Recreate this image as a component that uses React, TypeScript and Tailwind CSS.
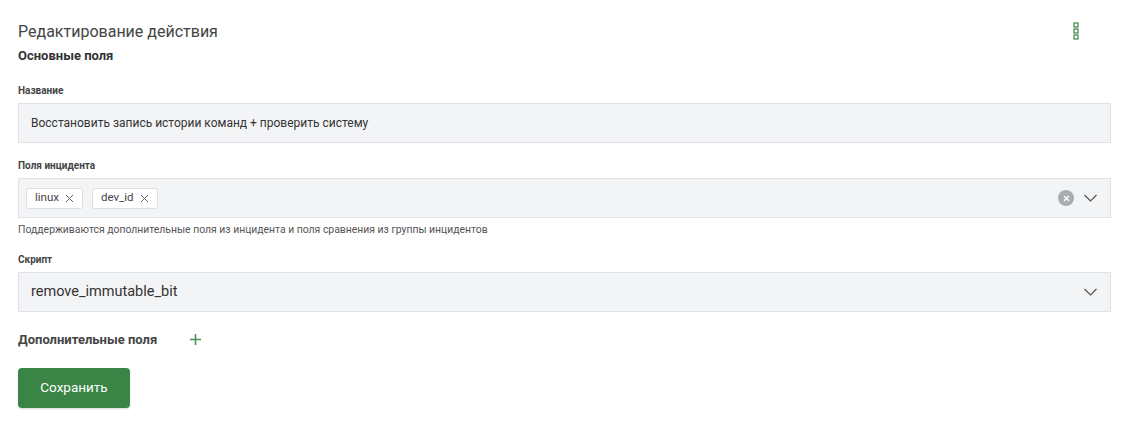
import React from 'react';

const font = { fontFamily: 'Roboto, "Noto Sans", sans-serif' };

function DotsIcon() {
  return (
    <svg width="6" height="18" viewBox="0 0 6 18" className="text-[#2a7a36]">
      <rect x="1" y="1" width="4" height="4" fill="none" stroke="currentColor" strokeWidth="1.1" />
      <rect x="1" y="7" width="4" height="4" fill="none" stroke="currentColor" strokeWidth="1.1" />
      <rect x="1" y="13" width="4" height="4" fill="none" stroke="currentColor" strokeWidth="1.1" />
    </svg>
  );
}

function Chevron() {
  return (
    <svg width="13" height="8" viewBox="0 0 13 8" className="text-[#555]">
      <path d="M0.5 1l6 6 6-6" fill="none" stroke="currentColor" strokeWidth="1.2" />
    </svg>
  );
}

function SmallX({ className = '' }: { className?: string }) {
  return (
    <svg width="9" height="9" viewBox="0 0 9 9" className={className}>
      <path d="M1 1l7 7M8 1L1 8" stroke="currentColor" strokeWidth="1" />
    </svg>
  );
}

function Tag({ label }: { label: string }) {
  return (
    <span className="flex h-[21px] items-center gap-[6px] rounded-[3px] border border-[#dcdde0] bg-white px-[8px] text-[11.5px] text-[#444]">
      {label}
      <SmallX className="text-[#666]" />
    </span>
  );
}

function Label({ children }: { children: React.ReactNode }) {
  return <div className="mb-[5px] text-[10px] font-bold leading-[15px] text-[#444]">{children}</div>;
}

const box = 'flex h-[40px] items-center border border-[#e1e2e5] bg-[#f3f4f6]';

export default function App() {
  return (
    <div className="min-h-screen bg-white text-[#333]" style={font}>
      <div className="pl-[18px] pr-[12px] pt-[20px]">
        <div className="flex items-start justify-between pr-[32px]">
          <h1 className="text-[16px] leading-[24px] text-[#444]">Редактирование действия</h1>
          <div className="pt-[2px]">
            <DotsIcon />
          </div>
        </div>
        <h2 className="mt-[3px] text-[13px] font-bold leading-[18px] text-[#333]">Основные поля</h2>

        <div className="mt-[18px]">
          <Label>Название</Label>
          <div className={`${box} px-[12px] text-[12px] text-[#333]`}>
            Восстановить запись истории команд + проверить систему
          </div>
        </div>

        <div className="mt-[15px]">
          <Label>Поля инцидента</Label>
          <div className={`${box} justify-between pl-[7px] pr-[13px]`}>
            <div className="flex gap-[9px]">
              <Tag label="linux" />
              <Tag label="dev_id" />
            </div>
            <div className="flex items-center gap-[10px]">
              <span className="flex h-[16px] w-[16px] items-center justify-center rounded-full bg-[#a9acb0]">
                <svg width="7" height="7" viewBox="0 0 7 7">
                  <path d="M1 1l5 5M6 1L1 6" stroke="white" strokeWidth="1.4" />
                </svg>
              </span>
              <Chevron />
            </div>
          </div>
          <div className="mt-[4px] text-[10.4px] leading-[15px] text-[#555]">
            Поддерживаются дополнительные поля из инцидента и поля сравнения из группы инцидентов
          </div>
        </div>

        <div className="mt-[15px]">
          <Label>Скрипт</Label>
          <div className={`${box} justify-between pl-[12px] pr-[13px]`}>
            <span className="text-[14.5px] text-[#333]">remove_immutable_bit</span>
            <Chevron />
          </div>
        </div>

        <div className="mt-[18px] flex items-center gap-[33px]">
          <span className="text-[13px] font-bold text-[#444]">Дополнительные поля</span>
          <svg width="11" height="11" viewBox="0 0 11 11">
            <path d="M5.5 0v11M0 5.5h11" stroke="#4a9156" strokeWidth="1.6" />
          </svg>
        </div>

        <button className="mt-[18px] h-[40px] w-[112px] rounded-[4px] bg-[#3a8546] text-[13.5px] text-white shadow-[0_1px_2px_rgba(0,0,0,0.15)]">
          Сохранить
        </button>
      </div>
    </div>
  );
}
